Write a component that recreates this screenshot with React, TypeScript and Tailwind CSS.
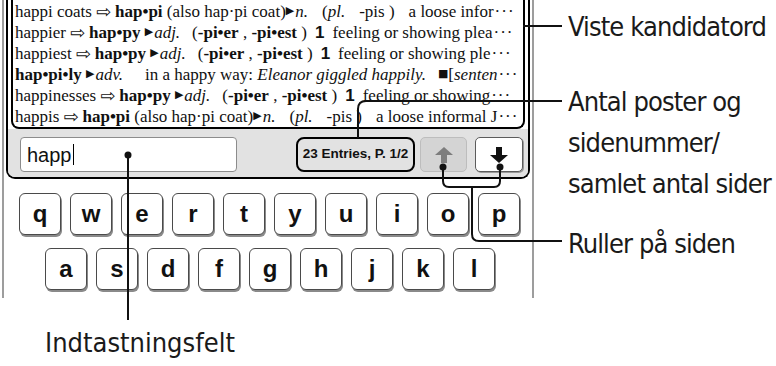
import type { ReactNode } from 'react';

// small glyph helpers for the dictionary rows
const Arr = () => <span className="mx-[4px] font-['DejaVu_Sans',sans-serif] text-[18px] leading-none">⇨</span>;
const Tri = () => <span className="mr-[1px] font-['DejaVu_Sans',sans-serif] text-[11px]">▶</span>;
const One = () => <span className="mx-[8px] font-['Liberation_Sans',sans-serif] font-bold">1</span>;
const Ell = () => <span className="ml-[1px] tracking-[1px]">···</span>;

const Row = ({ children }: { children: ReactNode }) => (
    <div className="flex h-[21px] items-center whitespace-nowrap pl-[2px]">{children}</div>
);

const Key = ({ k }: { k: string }) => (
    <div className="flex h-[42px] w-[42px] items-center justify-center rounded-[6px] border-[1.5px] border-[#4a4a4a] bg-white text-[24px] font-bold leading-none text-[#111] shadow-[1px_2px_0_#8a8a8a]">
        {k}
    </div>
);

const Arrow = ({ up, color }: { up: boolean; color: string }) => (
    <svg width="20" height="18" viewBox="0 0 20 18">
        <polygon
            points={up ? '10,1 19,9 13,9 13,17 7,17 7,9 1,9' : '10,17 19,9 13,9 13,1 7,1 7,9 1,9'}
            fill={color}
        />
    </svg>
);

export default function App() {
    return (
        <div className="relative flex h-[366px] w-[776px] overflow-hidden bg-white">
            {/* Device + bottom callout */}
            <div className="flex w-[534px] shrink-0 flex-col">
                <div className="ml-[2px] h-[298px] w-[532px] border-x-2 border-[#9d9d9d]">
                    {/* Screen */}
                    <div className="mx-[2px] overflow-hidden rounded-b-[9px] border-2 border-t-0 border-black bg-white">
                        {/* Candidate list */}
                        <div className="mx-[3px] rounded-b-[8px] border-2 border-t-0 border-black bg-white pt-[1px] font-['Liberation_Serif',serif] text-[17px] text-[#111]">
                            <Row>
                                happi coats<Arr /><b>hap•pi</b>&nbsp;(also hap·pi coat)<Tri /><i>n.</i>
                                <span className="ml-[14px]">(<i>pl.</i></span>
                                <span className="ml-[14px]">-pis )</span>
                                <span className="ml-[14px]">a loose infor</span><Ell />
                            </Row>
                            <Row>
                                happier<Arr /><b>hap•py</b>&nbsp;<Tri /><i>adj.</i>
                                <span className="ml-[12px]">(<b>-pi•er</b> , <b>-pi•est</b> )</span><One />feeling or showing plea<Ell />
                            </Row>
                            <Row>
                                happiest<Arr /><b>hap•py</b>&nbsp;<Tri /><i>adj.</i>
                                <span className="ml-[12px]">(<b>-pi•er</b> , <b>-pi•est</b> )</span><One />feeling or showing ple<Ell />
                            </Row>
                            <Row>
                                <b>hap•pi•ly</b>&nbsp;<Tri /><i>adv.</i>
                                <span className="ml-[22px]">in a happy way:&nbsp;<i>Eleanor giggled happily.</i></span>
                                <span className="ml-[12px] font-['DejaVu_Sans',sans-serif] text-[11px]">■</span>[<i>senten</i><Ell />
                            </Row>
                            <Row>
                                happinesses<Arr /><b>hap•py</b>&nbsp;<Tri /><i>adj.</i>
                                <span className="ml-[12px]">(<b>-pi•er</b> , <b>-pi•est</b> )</span><One />feeling or showing <Ell />
                            </Row>
                            <Row>
                                happis<Arr /><b>hap•pi</b>&nbsp;(also hap·pi coat)<Tri /><i>n.</i>
                                <span className="ml-[14px]">(<i>pl.</i></span>
                                <span className="ml-[14px]">-pis )</span>
                                <span className="ml-[14px]">a loose informal J</span><Ell />
                            </Row>
                        </div>

                        {/* Input bar */}
                        <div className="flex h-[48px] items-start bg-[#e2e2e2] pl-[12px] pt-[8px] font-['Liberation_Sans',sans-serif]">
                            <div className="flex h-[35px] w-[217px] items-center rounded-[4px] border-[1.5px] border-[#8c8c8c] bg-white pl-[6px] text-[20px] text-[#111]">
                                happ<span className="ml-[1px] h-[21px] w-[1.5px] bg-black" />
                            </div>
                            <div className="ml-[59px] flex h-[35px] w-[119px] items-center justify-center rounded-[8px] border-2 border-black text-[13.5px] font-bold text-[#111]">
                                23 Entries, P. 1/2
                            </div>
                            <div className="ml-[5px] flex h-[35px] w-[47px] items-center justify-center rounded-[5px] border-[1.5px] border-[#bdbdbd] bg-[#d4d4d4]">
                                <Arrow up color="#7d7d7d" />
                            </div>
                            <div className="ml-[8px] flex h-[35px] w-[48px] items-center justify-center rounded-[5px] border-[1.5px] border-[#5c5c5c] bg-white shadow-[1px_1px_0_#999]">
                                <Arrow up={false} color="#111" />
                            </div>
                        </div>
                    </div>

                    {/* Keyboard */}
                    <div className="mt-[14px] flex flex-col gap-[13px] font-['Liberation_Sans',sans-serif]">
                        <div className="flex gap-[9px] pl-[15px]">
                            {['q', 'w', 'e', 'r', 't', 'y', 'u', 'i', 'o', 'p'].map((k) => (
                                <Key key={k} k={k} />
                            ))}
                        </div>
                        <div className="flex gap-[9px] pl-[41px]">
                            {['a', 's', 'd', 'f', 'g', 'h', 'j', 'k', 'l'].map((k) => (
                                <Key key={k} k={k} />
                            ))}
                        </div>
                    </div>
                </div>

                <div className="mt-[24px] w-[280px] text-center font-['Liberation_Sans_Narrow','DejaVu_Sans_Condensed',sans-serif] text-[27px] leading-[41px] text-[#1a1a1a]">
                    Indtastningsfelt
                </div>
            </div>

            {/* Right callouts */}
            <div className="flex flex-col whitespace-nowrap pl-[34px] pt-[6px] font-['Liberation_Sans_Narrow','DejaVu_Sans_Condensed',sans-serif] text-[27px] leading-[41px] tracking-[-0.9px] text-[#1a1a1a]">
                <div>Viste kandidatord</div>
                <div className="mt-[34px]">
                    <div>Antal poster og</div>
                    <div>sidenummer/</div>
                    <div>samlet antal sider</div>
                </div>
                <div className="mt-[19px]">Ruller på siden</div>
            </div>

            {/* Leader lines */}
            <svg className="pointer-events-none absolute left-0 top-0" width="776" height="366" viewBox="0 0 776 366">
                <g fill="none" stroke="#111" strokeWidth="2">
                    <path d="M523 26 H562" />
                    <path d="M358 138 V109 Q358 101 366 101 H562" />
                    <path d="M443 167 V181 Q443 187 449 187 H494 Q500 187 500 181 V167" />
                    <path d="M472 187 V234 Q472 241 479 241 H562" />
                    <path d="M128 155 V320" />
                </g>
                <g fill="#111">
                    <circle cx="128" cy="155" r="3.5" />
                    <circle cx="443" cy="167" r="3.5" />
                    <circle cx="500" cy="167" r="3.5" />
                </g>
            </svg>
        </div>
    );
}
